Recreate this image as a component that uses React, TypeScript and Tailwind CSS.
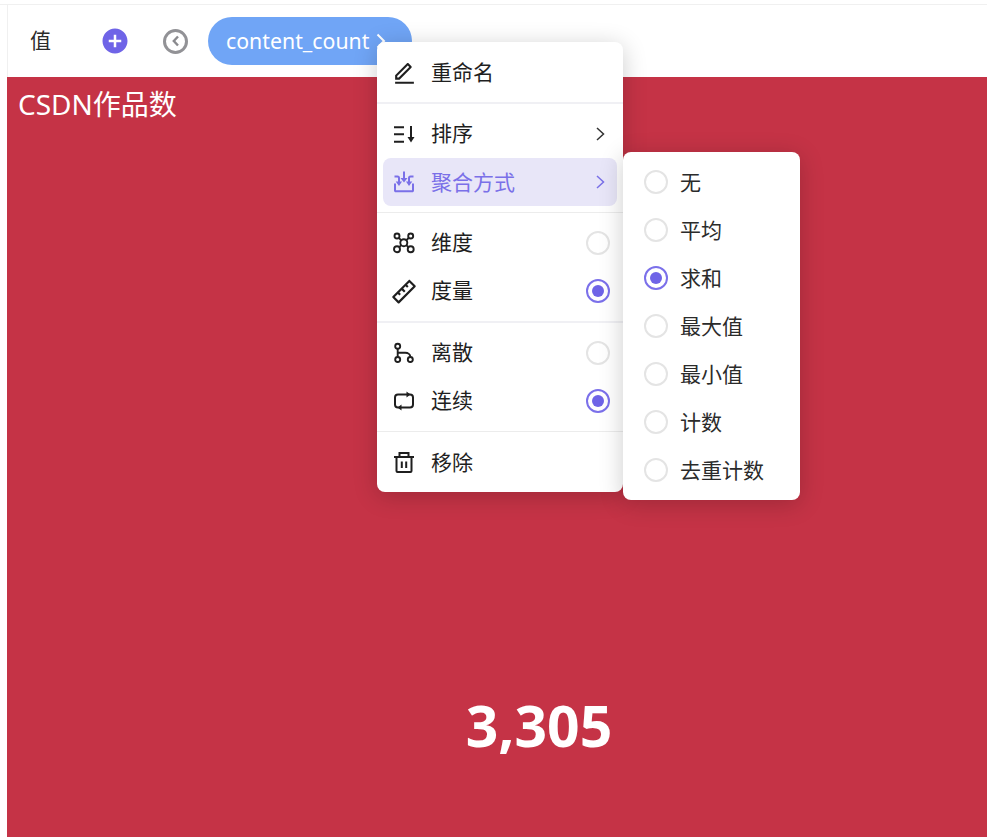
import React from "react";
import { RiAddCircleFill, RiEditLine, RiRulerLine } from "react-icons/ri";

const FONT = "font-['Noto_Sans','Noto_Sans_CJK_SC',sans-serif]";

function Radio({ on }: { on?: boolean }) {
  return on ? (
    <span className="flex h-6 w-6 shrink-0 items-center justify-center rounded-full border-2 border-[#7b70ea] bg-white">
      <span className="h-3 w-3 rounded-full bg-[#6f64e7]" />
    </span>
  ) : (
    <span className="h-6 w-6 shrink-0 rounded-full border-2 border-[#e4e4e4] bg-white" />
  );
}

const Svg = ({ children, sw = 2 }: { children: React.ReactNode; sw?: number }) => (
  <svg viewBox="0 0 24 24" width="24" height="24" fill="none" stroke="currentColor" strokeWidth={sw} className="shrink-0">
    {children}
  </svg>
);

const Chevron = () => (
  <svg viewBox="0 0 12 16" width="12" height="16" fill="none" stroke="currentColor" strokeWidth="1.5" className="shrink-0">
    <path d="M2 2l6.500 6L2 14" />
  </svg>
);
const SortIcon = () => (
  <Svg>
    <path d="M2 5.300h10M2 12.300h10M2 19.700h10" />
    <path d="M19 4v12" />
    <path d="M15.500 15h7L19 20.500z" fill="currentColor" stroke="none" />
  </Svg>
);
const MergeIcon = () => (
  <Svg>
    <path d="M12 1.500v7" />
    <path d="M8.500 8h7L12 12.500z" fill="currentColor" stroke="none" />
    <path d="M3 13.500V20.500a.8.8 0 0 0 .8.8h16.400a.8.8 0 0 0 .8-.8V13.500" />
    <path d="M2.500 6.500H5.500a1.500 1.500 0 0 1 1.500 1.500v4M21.500 6.500H18.500a1.500 1.500 0 0 0-1.500 1.500v4" />
    <path d="M3.700 11.500h6.300L7 16zM14 11.500h6.300L17 16z" fill="currentColor" stroke="none" />
  </Svg>
);
const NodesIcon = () => (
  <Svg sw={1.9}>
    <circle cx="5" cy="5" r="2.500" />
    <circle cx="18.700" cy="5" r="2.500" />
    <circle cx="5" cy="18.300" r="3" />
    <circle cx="18.700" cy="18.300" r="3" />
    <circle cx="11.800" cy="11.700" r="3.500" />
    <path d="M6.800 6.800 9.300 9.300M16.900 6.800 14.300 9.300M7.200 16.200 9.300 14.100M16.500 16.200 14.300 14.100" />
  </Svg>
);
const BranchIcon = () => (
  <Svg sw={1.9}>
    <circle cx="5.700" cy="5.200" r="2.500" />
    <circle cx="5.700" cy="18.500" r="2.500" />
    <circle cx="18.300" cy="18.500" r="2.500" />
    <path d="M5.700 7.700v8.300" />
    <path d="M5.700 11.800h7.600a5 4 0 0 1 5 4" />
  </Svg>
);
const LoopIcon = () => (
  <Svg>
    <path d="M3 16V8.500a3 3 0 0 1 3-3h10" />
    <path d="M21 8v7.500a3 3 0 0 1-3 3H8" />
    <path d="M3 15.500a3 3 0 0 0 3 3h2M21 8.500a3 3 0 0 0-3-3h-2" />
    <path d="M14.500 2.500 18.500 5.500 14.500 8.500zM9.500 15.500 5.500 18.500 9.500 21.500z" fill="currentColor" stroke="none" />
  </Svg>
);
const TrashIcon = () => (
  <Svg>
    <path d="M2 6h20" />
    <path d="M4.500 6v14a1 1 0 0 0 1 1h13a1 1 0 0 0 1-1V6" />
    <path d="M7.500 6V2h9v4" />
    <path d="M9.800 10.500v6.500M14.200 10.500v6.500" />
  </Svg>
);

type Item = { label: string; icon: React.ReactNode; radio?: boolean; on?: boolean; arrow?: boolean; active?: boolean };

function Row({ label, icon, radio, on, arrow, active }: Item) {
  return (
    <div className={`mx-1.5 flex h-12 items-center rounded-lg pl-[9px] pr-[7px] text-[21px] ${active ? "bg-[#e8e6f8] text-[#7a70e8]" : "text-[#1f1f1f]"}`}>
      <span className="flex h-6 w-6 items-center justify-center">{icon}</span>
      <span className={`ml-[15px] flex-1 ${active ? "pt-px" : ""}`}>{label}</span>
      {arrow && <span className={`mr-[3px] ${active ? "" : "text-[#333]"}`}><Chevron /></span>}
      {radio !== undefined && <Radio on={on} />}
    </div>
  );
}

const SUB = ["无", "平均", "求和", "最大值", "最小值", "计数", "去重计数"];

export default function App() {
  return (
    <div className={`${FONT} flex h-[837px] w-[987px] flex-col overflow-hidden bg-white`}>
      <div className="h-1 shrink-0" />
      <div className="h-px shrink-0 bg-[#f0f0f0]" />
      <div className="flex min-h-0 flex-1 flex-col border-l-[7px] border-white">
        <div className="flex h-[72px] shrink-0 items-center border-l border-[#f0f0f0] pl-[22px]">
          <span className="w-[70px] text-[21px] text-[#2b2b2b]">值</span>
          <RiAddCircleFill size={30} className="text-[#6f64e7]" />
          <span className="ml-[33px] flex h-[25px] w-[25px] items-center justify-center rounded-full border-[3px] border-[#929296] text-[#8a8a8e]">
            <svg viewBox="0 0 10 12" width="10" height="12" fill="none" stroke="currentColor" strokeWidth="2.400">
              <path d="M7 1.500 2.800 6 7 10.500" />
            </svg>
          </span>
          <div className="ml-[20px] flex h-12 w-[204px] items-center rounded-3xl bg-[#70a5f6] pl-[18px] text-[21.3px] text-white">
            content_count
            <svg viewBox="0 0 10 16" width="10" height="16" fill="none" stroke="currentColor" strokeWidth="2" className="ml-[7px]">
              <path d="M1.500 1.500 8 8 1.500 14.500" />
            </svg>
          </div>
        </div>
        <div className="flex min-h-0 flex-1 flex-col bg-[#c53346] text-white">
          <div className="pl-[11px] pt-[7px] text-[28px] leading-10">CSDN作品数</div>
          <div className="flex flex-1 items-end justify-center pb-[72px] pl-[84px] text-[57px] font-bold leading-[80px]">3,305</div>
        </div>
      </div>

      <div className="absolute left-[377px] top-[42px] w-[246px] rounded-lg bg-white shadow-[0_4px_24px_rgba(0,0,0,0.2)]">
        <div className="border-b-2 border-[#f0f0f4] pb-[5px] pt-[7px]">
          <Row label="重命名" icon={<RiEditLine size={25} className="shrink-0" />} />
        </div>
        <div className="border-b border-[#ececec] py-1.5">
          <Row label="排序" icon={<SortIcon />} arrow />
          <Row label="聚合方式" icon={<MergeIcon />} arrow active />
        </div>
        <div className="border-b-2 border-[#f0f0f4] py-1.5">
          <Row label="维度" icon={<NodesIcon />} radio />
          <Row label="度量" icon={<RiRulerLine size={26} className="shrink-0" />} radio on />
        </div>
        <div className="border-b border-[#ececec] py-1.5">
          <Row label="离散" icon={<BranchIcon />} radio />
          <Row label="连续" icon={<LoopIcon />} radio on />
        </div>
        <div className="pb-[5px] pt-[7px]">
          <Row label="移除" icon={<TrashIcon />} />
        </div>
      </div>

      <div className="absolute left-[623px] top-[152px] w-[177px] rounded-lg bg-white py-1.5 shadow-[0_4px_24px_rgba(0,0,0,0.2)]">
        {SUB.map((s, i) => (
          <div key={s} className="flex h-12 items-center gap-3 pl-[21px] text-[21px] text-[#2b2b2b]">
            <Radio on={i === 2} />
            <span className="pt-px">{s}</span>
          </div>
        ))}
      </div>
    </div>
  );
}
